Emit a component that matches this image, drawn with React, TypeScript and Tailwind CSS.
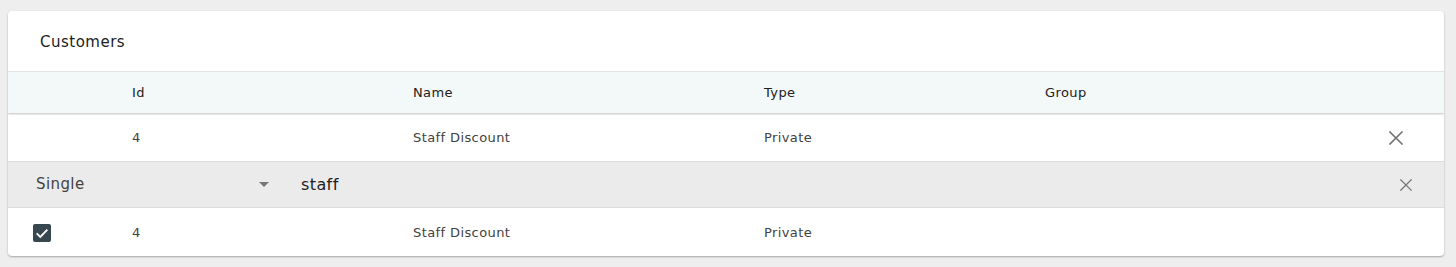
import React from "react";

const cols = "grid grid-cols-[124px_281px_351px_281px_1fr] items-center";

function XIcon({ size, stroke }: { size: number; stroke: number }) {
  return (
    <svg width={size} height={size} viewBox="0 0 14 14" fill="none">
      <path d="M1 1L13 13M13 1L1 13" stroke="#757575" strokeWidth={stroke} strokeLinecap="square" />
    </svg>
  );
}

export default function App() {
  return (
    <div className="min-h-[267px] bg-[#eeeeee] pt-[11px] pl-2 pr-3 pb-[10px]" style={{ fontFamily: "'DejaVu Sans', sans-serif" }}>
      <div className="bg-white rounded-[4px] shadow-[0_1px_2px_rgba(0,0,0,0.3)] overflow-hidden">
        <div className="h-[61px] flex items-center pl-8 pt-[2px] border-b border-[#e3e7e7] text-[15px] tracking-[0.5px] text-[#212121]">
          Customers
        </div>
        <div className={`${cols} h-[41px] pt-[1px] bg-[#f3f8f8] text-[13px] tracking-[0.4px] text-[#212121] shadow-[0_1px_2px_rgba(0,0,0,0.25)] relative z-10`}>
          <div />
          <div>Id</div>
          <div>Name</div>
          <div>Type</div>
          <div>Group</div>
        </div>
        <div className={`${cols} h-[48px] pt-[1px] text-[13px] tracking-[0.4px] text-[#424242]`}>
          <div />
          <div>4</div>
          <div>Staff Discount</div>
          <div>Private</div>
          <div className="flex justify-end pr-[41px]">
            <XIcon size={14} stroke={1.6} />
          </div>
        </div>
        <div className="h-[47px] bg-[#ebebeb] border-y border-[#dddddd] flex items-center text-[#424242]">
          <div className="ml-7 w-[234px] flex items-center justify-between text-[15px] tracking-[0.4px]">
            <span>Single</span>
            <svg width="10" height="5" viewBox="0 0 10 5" className="mr-[1px]">
              <path d="M0 0L10 0L5 5Z" fill="#757575" />
            </svg>
          </div>
          <div className="ml-[31px] text-[16px] tracking-[0.4px] text-[#212121]">staff</div>
          <div className="ml-auto pr-[32px] flex items-center">
            <XIcon size={12} stroke={1.5} />
          </div>
        </div>
        <div className={`${cols} h-[48px] pt-[1px] text-[13px] tracking-[0.4px] text-[#424242]`}>
          <div className="pl-[25px] flex items-center">
            <div className="w-[18px] h-[18px] rounded-[2px] bg-[#37474f] flex items-center justify-center">
              <svg width="16" height="16" viewBox="0 0 24 24" fill="none">
                <path d="M4 12.5L9.5 18L20 7" stroke="white" strokeWidth="2.8" />
              </svg>
            </div>
          </div>
          <div>4</div>
          <div>Staff Discount</div>
          <div>Private</div>
          <div />
        </div>
      </div>
    </div>
  );
}
